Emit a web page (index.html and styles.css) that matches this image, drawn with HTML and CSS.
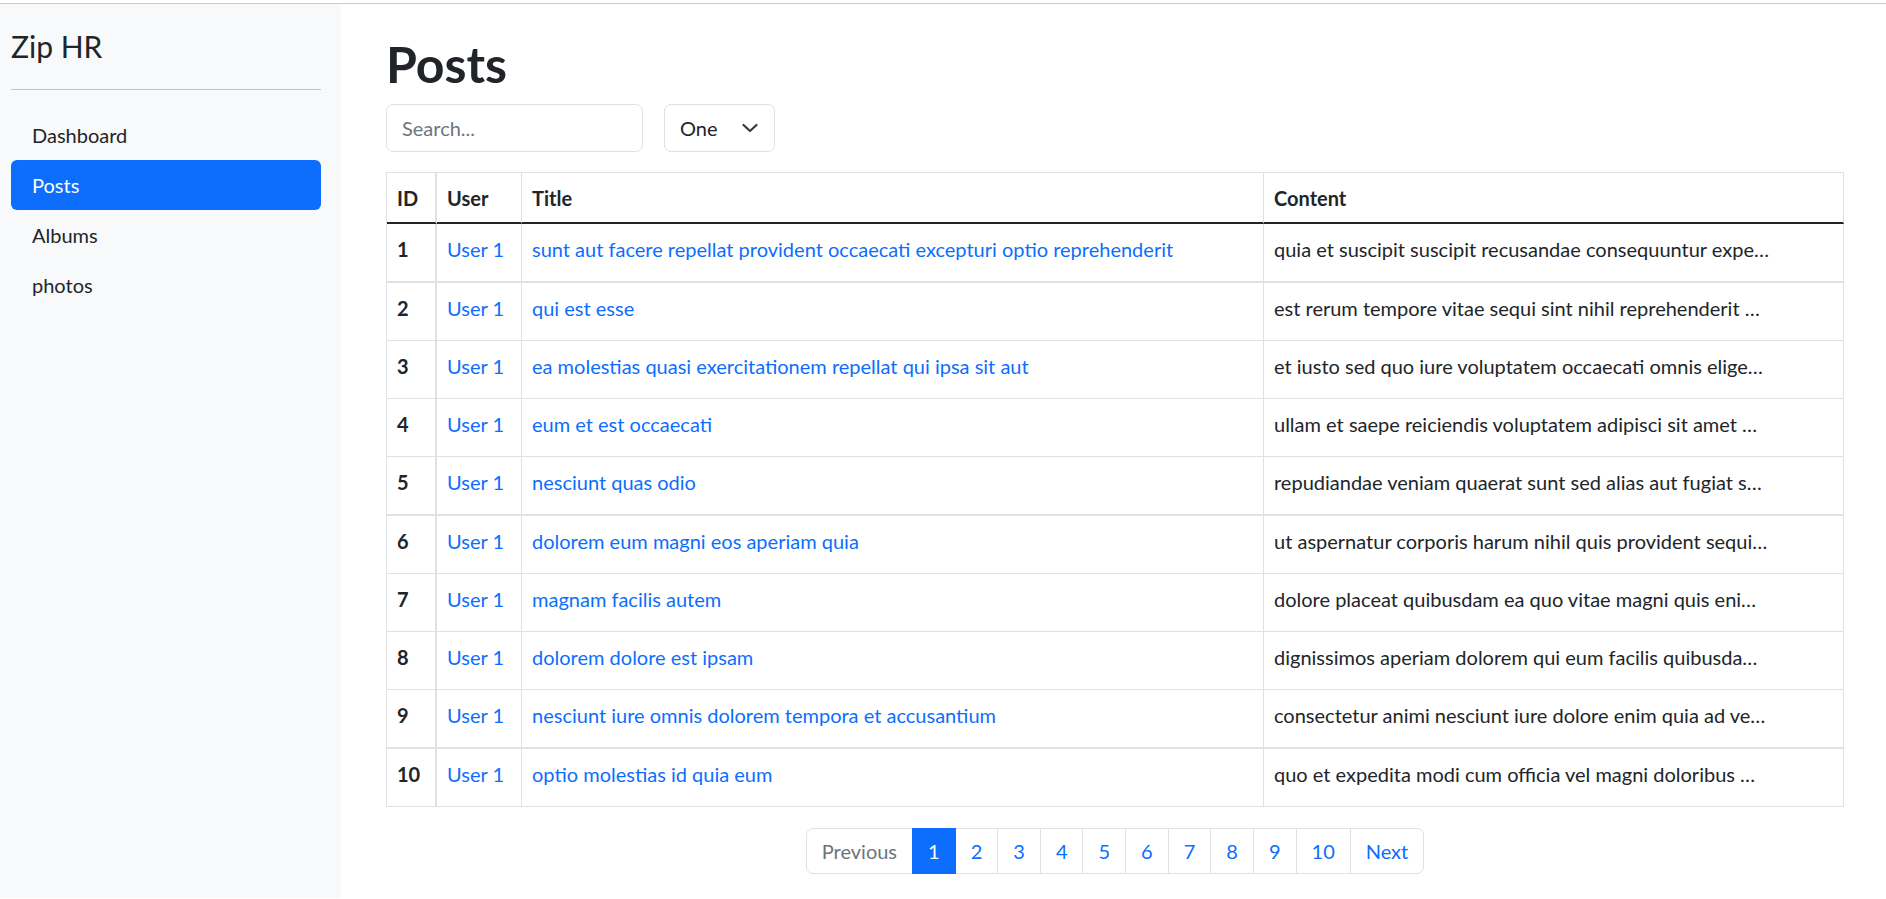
FILE: index.html
```html
<!DOCTYPE html>
<html lang="en">
<head>
<meta charset="utf-8">
<title>Zip HR - Posts</title>
<link rel="stylesheet" href="styles.css">
</head>
<body>
<div class="app">
  <aside class="sidebar">
    <div class="brand">Zip HR</div>
    <hr class="divider">
    <nav class="nav">
      <a class="nav-link" href="#">Dashboard</a>
      <a class="nav-link active" href="#">Posts</a>
      <a class="nav-link" href="#">Albums</a>
      <a class="nav-link" href="#">photos</a>
    </nav>
  </aside>
  <main class="main">
    <h1 class="title">Posts</h1>
    <div class="controls">
      <input class="search" type="text" placeholder="Search...">
      <div class="select">
        <span>One</span>
        <svg class="chevron" width="16" height="10" viewBox="0 0 16 10"><path d="M1.5 2l6.5 6 6.5-6" fill="none" stroke="#343a40" stroke-width="2.2" stroke-linecap="round" stroke-linejoin="round"/></svg>
      </div>
    </div>
    <table class="posts">
      <colgroup>
        <col class="c-id"><col class="c-user"><col class="c-title"><col>
      </colgroup>
      <thead>
        <tr><th>ID</th><th>User</th><th>Title</th><th>Content</th></tr>
      </thead>
      <tbody>
        <tr><td class="id">1</td><td><a href="#">User 1</a></td><td><a href="#">sunt aut facere repellat provident occaecati excepturi optio reprehenderit</a></td><td><div class="trunc">quia et suscipit suscipit recusandae consequuntur expe…</div></td></tr>
        <tr><td class="id">2</td><td><a href="#">User 1</a></td><td><a href="#">qui est esse</a></td><td><div class="trunc">est rerum tempore vitae sequi sint nihil reprehenderit …</div></td></tr>
        <tr><td class="id">3</td><td><a href="#">User 1</a></td><td><a href="#">ea molestias quasi exercitationem repellat qui ipsa sit aut</a></td><td><div class="trunc">et iusto sed quo iure voluptatem occaecati omnis elige…</div></td></tr>
        <tr><td class="id">4</td><td><a href="#">User 1</a></td><td><a href="#">eum et est occaecati</a></td><td><div class="trunc">ullam et saepe reiciendis voluptatem adipisci sit amet …</div></td></tr>
        <tr><td class="id">5</td><td><a href="#">User 1</a></td><td><a href="#">nesciunt quas odio</a></td><td><div class="trunc">repudiandae veniam quaerat sunt sed alias aut fugiat s…</div></td></tr>
        <tr><td class="id">6</td><td><a href="#">User 1</a></td><td><a href="#">dolorem eum magni eos aperiam quia</a></td><td><div class="trunc">ut aspernatur corporis harum nihil quis provident sequi…</div></td></tr>
        <tr><td class="id">7</td><td><a href="#">User 1</a></td><td><a href="#">magnam facilis autem</a></td><td><div class="trunc">dolore placeat quibusdam ea quo vitae magni quis eni…</div></td></tr>
        <tr><td class="id">8</td><td><a href="#">User 1</a></td><td><a href="#">dolorem dolore est ipsam</a></td><td><div class="trunc">dignissimos aperiam dolorem qui eum facilis quibusda…</div></td></tr>
        <tr><td class="id">9</td><td><a href="#">User 1</a></td><td><a href="#">nesciunt iure omnis dolorem tempora et accusantium</a></td><td><div class="trunc">consectetur animi nesciunt iure dolore enim quia ad ve…</div></td></tr>
        <tr><td class="id">10</td><td><a href="#">User 1</a></td><td><a href="#">optio molestias id quia eum</a></td><td><div class="trunc">quo et expedita modi cum officia vel magni doloribus …</div></td></tr>
      </tbody>
    </table>
    <ul class="pagination">
      <li class="page disabled"><span>Previous</span></li>
      <li class="page active"><span>1</span></li>
      <li class="page"><a href="#">2</a></li>
      <li class="page"><a href="#">3</a></li>
      <li class="page"><a href="#">4</a></li>
      <li class="page"><a href="#">5</a></li>
      <li class="page"><a href="#">6</a></li>
      <li class="page"><a href="#">7</a></li>
      <li class="page"><a href="#">8</a></li>
      <li class="page"><a href="#">9</a></li>
      <li class="page"><a href="#">10</a></li>
      <li class="page"><a href="#">Next</a></li>
    </ul>
  </main>
</div>
</body>
</html>
```
FILE: styles.css
```css
* { box-sizing: border-box; }
html, body { margin: 0; padding: 0; }
body {
  font-family: Lato, "Noto Sans", sans-serif;
  font-size: 20px;
  line-height: 30px;
  color: #212529;
  background: #fff;
  padding-top: 3px;
}
a { color: #0d6efd; text-decoration: none; }

.app {
  display: flex;
  border-top: 1px solid #cccccc;
  min-height: 895px;
}

.sidebar {
  width: 341px;
  flex: 0 0 341px;
  background: #f8f9fa;
  padding: 24px 20px 0 11px;
}
.brand {
  font-size: 30px;
  line-height: 36px;
  font-weight: 400;
}
.divider {
  border: 0;
  border-top: 1px solid #c4c5c6;
  margin: 25px 0 20px;
}
.nav { display: flex; flex-direction: column; }
.nav-link {
  display: block;
  height: 50px;
  line-height: 50px;
  padding: 0 21px;
  color: #212529;
  border-radius: 6px;
}
.nav-link.active { background: #0d6efd; color: #fff; }

.main {
  flex: 1;
  padding: 30px 42px 0 45px;
}
.title {
  font-size: 50px;
  line-height: 60px;
  font-weight: 700;
  margin: 0 0 10px;
}
.controls {
  display: flex;
  gap: 21px;
  margin-bottom: 20px;
}
.search {
  width: 257px;
  height: 48px;
  border: 1px solid #dee2e6;
  border-radius: 7px;
  padding: 0 15px;
  font-family: inherit;
  font-size: 20px;
  color: #212529;
  outline: none;
}
.search::placeholder { color: #6c757d; }
.select {
  width: 111px;
  height: 48px;
  border: 1px solid #dee2e6;
  border-radius: 7px;
  padding: 0 16px 0 15px;
  display: flex;
  align-items: center;
  justify-content: space-between;
}

.posts {
  width: 100%;
  table-layout: fixed;
  border-collapse: separate;
  border-spacing: 0;
  border-left: 1px solid #dee2e6;
  border-top: 1px solid #dee2e6;
}
.c-id { width: 50px; }
.c-user { width: 85px; }
.c-title { width: 742px; }
.posts th, .posts td {
  border-right: 1px solid #dee2e6;
  border-bottom: 1px solid #dee2e6;
  padding: 0 10px;
  text-align: left;
  vertical-align: middle;
  white-space: nowrap;
}
.posts th:first-child, .posts td:first-child { border-right-width: 2px; }
.posts th {
  height: 51px;
  font-weight: 700;
  border-bottom: 2px solid #212529;
}
.posts td { height: 58px; padding-bottom: 7px; }
.posts tbody tr:nth-child(4n+1) td { height: 59px; border-bottom-width: 2px; }
.posts td.id { font-weight: 700; }
.trunc {
  max-width: 500px;
  overflow: hidden;
  text-overflow: ellipsis;
  white-space: nowrap;
}

.pagination {
  list-style: none;
  margin: 21px 0 0;
  padding: 0;
  display: flex;
  justify-content: center;
}
.page > a, .page > span {
  display: block;
  height: 46px;
  line-height: 44px;
  padding: 0 15px;
  border: 1px solid #dee2e6;
  margin-left: -1px;
  color: #0d6efd;
  background: #fff;
}
.page:first-child > span { border-radius: 7px 0 0 7px; margin-left: 0; }
.page:last-child > a { border-radius: 0 7px 7px 0; }
.page.disabled > span { color: #6c757d; }
.page.active > span { background: #0d6efd; border-color: #0d6efd; color: #fff; position: relative; }
```
